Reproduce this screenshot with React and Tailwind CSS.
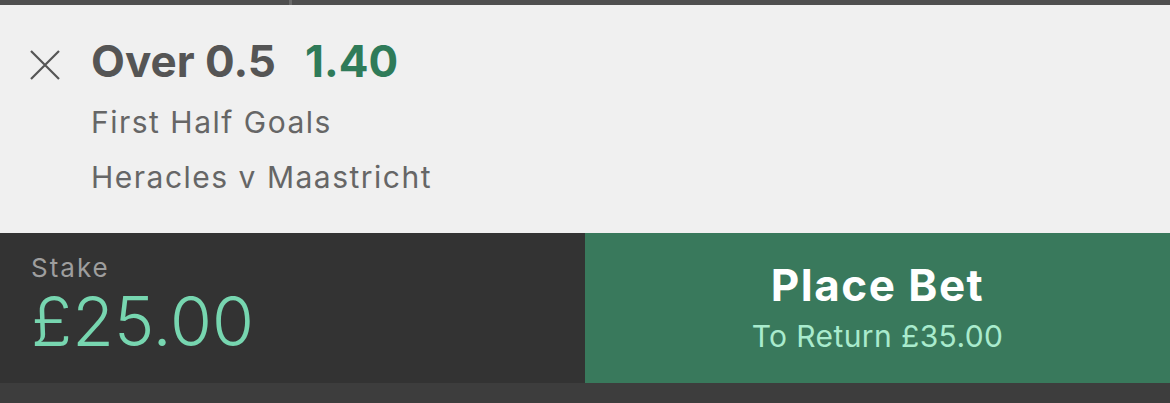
import React from "react";

const CloseIcon = () => (
  <svg width="30" height="30" viewBox="0 0 30 30" fill="none" stroke="#555555" strokeWidth="2.2">
    <path d="M1 1 L29 29 M29 1 L1 29" />
  </svg>
);

const BetSlip = () => {
  const bet = {
    selection: "Over 0.5",
    odds: "1.40",
    market: "First Half Goals",
    event: "Heracles v Maastricht",
    stake: "£25.00",
    toReturn: "£35.00",
  };

  return (
    <div className="w-[1170px] h-[403px] flex flex-col bg-[#f0f0f0] font-['Inter',sans-serif] overflow-hidden">
      {/* top nav edge */}
      <div className="h-[5px] bg-[#4f4f4f] flex">
        <div className="w-[289px]" />
        <div className="w-[3px] bg-[#6a6a6a]" />
      </div>

      {/* selection */}
      <div className="h-[228px] flex pl-[30px] pt-[45px]">
        <div className="w-[61px]">
          <CloseIcon />
        </div>
        <div className="flex flex-col -mt-[11px]">
          <div className="flex items-baseline gap-[29px] text-[44px] leading-[44px] font-bold">
            <span className="text-[#555555]">{bet.selection}</span>
            <span className="text-[#2f7b59]">{bet.odds}</span>
          </div>
          <div className="mt-[12px] text-[30px] leading-[55px] tracking-[1.5px] text-[#666666]">{bet.market}</div>
          <div className="text-[30px] leading-[55px] tracking-[1.5px] text-[#666666]">{bet.event}</div>
        </div>
      </div>

      {/* stake + place bet */}
      <div className="h-[150px] flex">
        <div className="w-[585px] bg-[#333333] pl-[31px] pt-[20px] flex flex-col">
          <span className="text-[26px] leading-[30px] tracking-[2px] text-[#9e9e9e]">Stake</span>
          <span className="text-[68px] leading-[76px] font-light text-[#77d6b0]">{bet.stake}</span>
        </div>
        <button className="flex-1 bg-[#39795c] flex flex-col items-center pt-[27px]">
          <span className="text-[44px] leading-[50px] tracking-[1.5px] font-bold text-white">Place Bet</span>
          <span className="mt-[8px] text-[30px] leading-[36px] tracking-[0.4px] text-[#a9ebcd]">To Return {bet.toReturn}</span>
        </button>
      </div>

      <div className="flex-1 bg-[#3d3d3d]" />
    </div>
  );
};

export default function App() {
  return <BetSlip />;
}
